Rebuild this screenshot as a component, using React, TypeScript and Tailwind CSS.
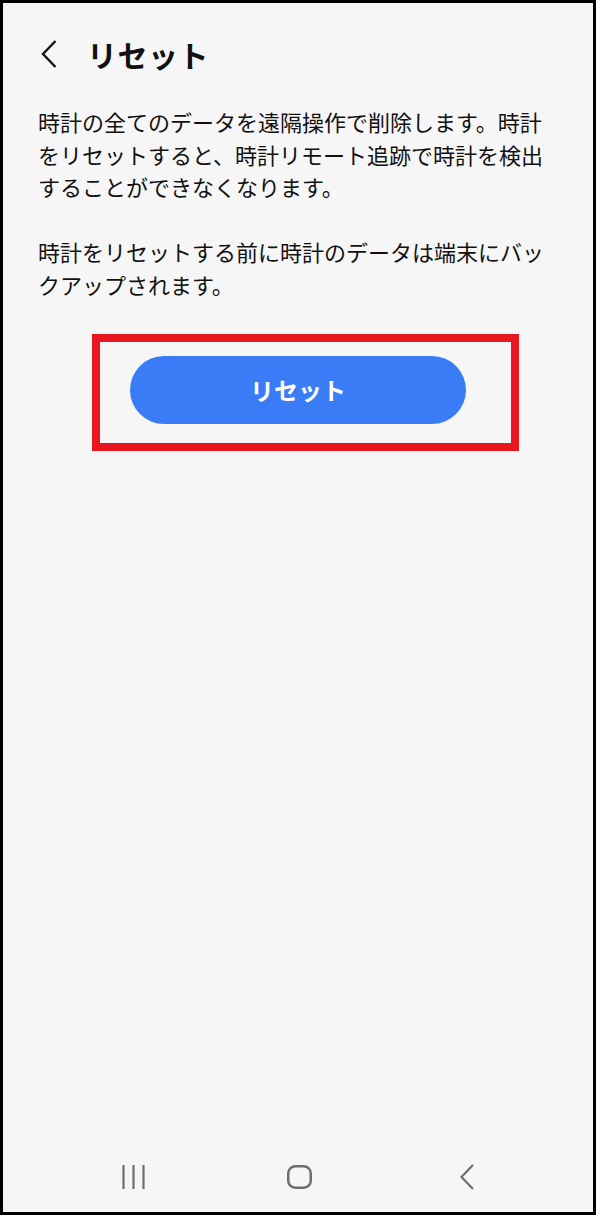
export default function App() {
  return (
    <div
      className="flex h-[1215px] w-[596px] flex-col border-[3px] border-black bg-[#f6f6f6] text-[#111]"
      style={{ fontFamily: '"Noto Sans CJK JP", "Noto Sans", sans-serif' }}
    >
      {/* header */}
      <div className="flex h-[102px] items-center gap-[30px] pl-[38px]">
        <svg width="16" height="28" viewBox="0 0 16 28" fill="none">
          <polyline points="14.5,1 2,14 14.5,27" stroke="#111" strokeWidth="2.4" />
        </svg>
        <h1 className="text-[30px] font-bold leading-none tracking-[0.5px]">リセット</h1>
      </div>

      <div className="px-[35px] text-[22px] leading-[32.5px]">
        <p>時計の全てのデータを遠隔操作で削除します。時計をリセットすると、時計リモート追跡で時計を検出することができなくなります。</p>
        <p className="mt-[32.5px]">時計をリセットする前に時計のデータは端末にバックアップされます。</p>
      </div>

      {/* highlighted button */}
      <div className="ml-[89px] mt-[34px] h-[117px] w-[427px] border-[8px] border-[#e8161f] pl-[30px] pt-[14px]">
        <button className="flex h-[68px] w-[336px] items-center justify-center rounded-full bg-[#3a7bf6] text-[24px] font-bold text-white">
          リセット
        </button>
      </div>

      <div className="flex-1" />

      {/* system nav */}
      <div className="flex h-[70px] items-center">
        <svg className="ml-[119px]" width="23" height="24" viewBox="0 0 23 24">
          <g stroke="#6f6f6f" strokeWidth="2.2">
            <line x1="1.5" y1="0" x2="1.5" y2="24" />
            <line x1="11.5" y1="0" x2="11.5" y2="24" />
            <line x1="21.5" y1="0" x2="21.5" y2="24" />
          </g>
        </svg>
        <svg className="ml-[142px]" width="25" height="24" viewBox="0 0 25 24" fill="none">
          <rect x="1.25" y="1.25" width="22.5" height="21.5" rx="7" stroke="#6f6f6f" strokeWidth="2.5" />
        </svg>
        <svg className="ml-[148px]" width="14" height="26" viewBox="0 0 14 26" fill="none">
          <polyline points="13,1 1.5,13 13,25" stroke="#6f6f6f" strokeWidth="2.2" />
        </svg>
      </div>
    </div>
  )
}
